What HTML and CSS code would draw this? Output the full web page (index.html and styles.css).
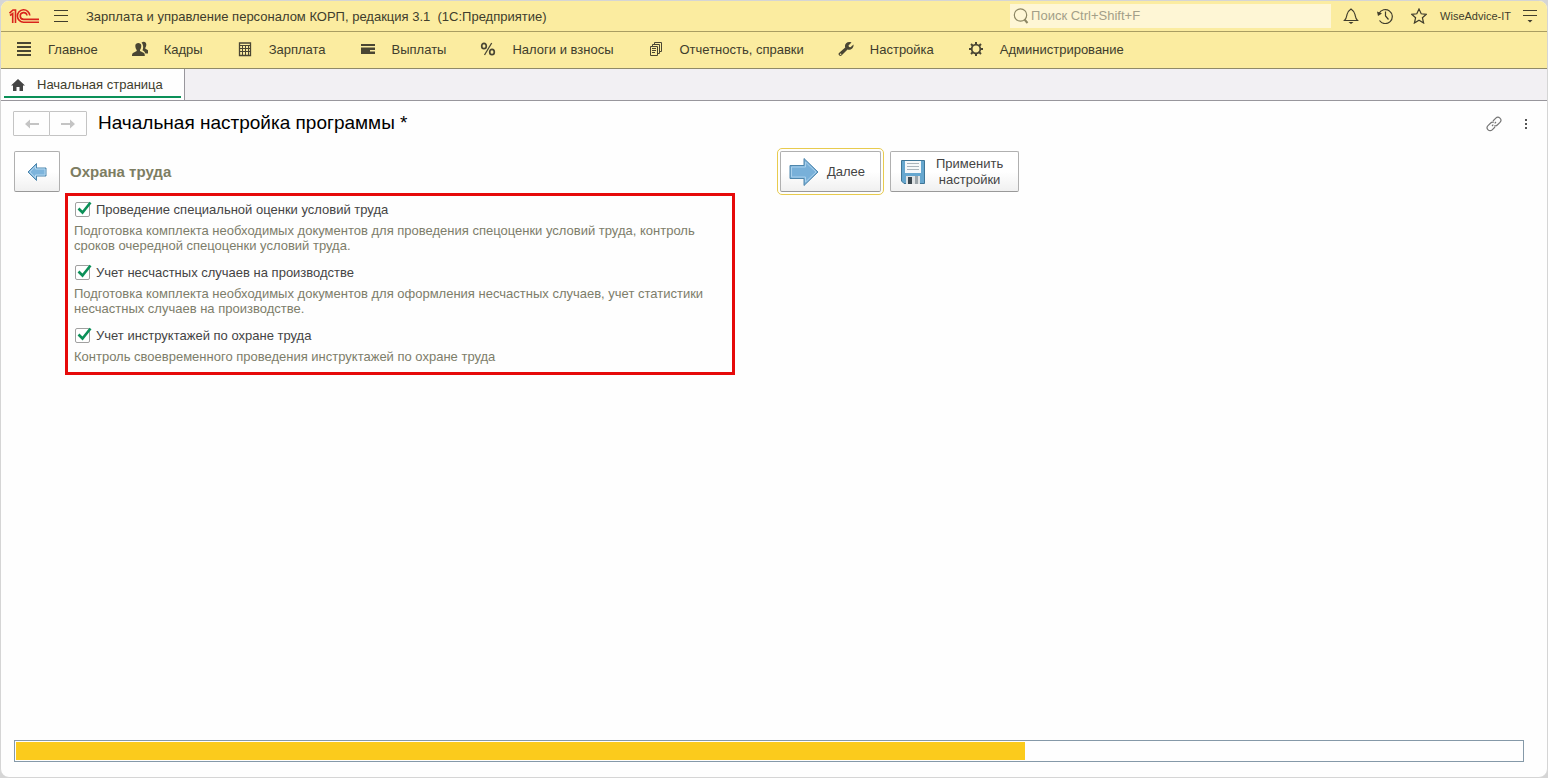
FILE: index.html
```
<!DOCTYPE html>
<html lang="ru">
<head>
    <meta charset="UTF-8">
    <meta name="viewport" content="width=device-width, initial-scale=1.0">
    <title>Зарплата и управление персоналом КОРП</title>
    <link rel="stylesheet" href="styles.css">
</head>
<body>
    <div class="window">
        <header class="titlebar">
            <svg class="logo" width="30" height="16" viewBox="0 0 30 16" fill="none" stroke="#d9241c" stroke-width="1.600">
                <path d="M.5 5.200L4 2H6.500V15M1 7.500L3.700 5.500V15"/>
                <path d="M20.800 7.500A6.200 6.200 0 1 0 14.600 14.200H30"/>
                <path d="M18 7.500A3.400 3.400 0 1 0 14.600 11.400H30"/>
            </svg>
            <button class="icon-btn burger" aria-label="Меню">
                <svg width="14" height="12" viewBox="0 0 14 12" stroke="#403d2c"><path d="M0 .5H14M0 5.500H14M0 11.500H14"/></svg>
            </button>
            <span class="app-title">Зарплата и управление персоналом КОРП, редакция 3.1&nbsp; (1С:Предприятие)</span>
            <label class="search">
                <svg width="16" height="16" viewBox="0 0 16 16" fill="none" stroke="#8c8664"><circle cx="7.500" cy="7" r="6.200" stroke-width="1.200"/><path d="M11.500 11.500L14.500 15" stroke-width="2"/></svg>
                <input type="text" placeholder="Поиск Ctrl+Shift+F" aria-label="Поиск">
            </label>
            <div class="tools">
                <button class="icon-btn" aria-label="Уведомления">
                    <svg width="16" height="16" viewBox="0 0 16 16" fill="none" stroke="#403d2c" stroke-width="1.200"><path d="M1.500 12.500H14.500C12.500 10.500 12.500 9 12 6.500C11.600 4 10.500 2.700 8 1C5.500 2.700 4.400 4 4 6.500C3.500 9 3.500 10.500 1.500 12.500Z"/><path d="M5.500 14H10.500L8 16Z" fill="#403d2c" stroke="none"/></svg>
                </button>
                <button class="icon-btn" aria-label="История">
                    <svg width="16" height="16" viewBox="0 0 16 16" fill="none" stroke="#403d2c" stroke-width="1.200"><path d="M2 5.500A7 7 0 1 1 2.500 12.500M8.500 3.500V8L11.500 11.500"/><path d="M0 3.500L5 5.500L1 8Z" fill="#403d2c" stroke="none"/></svg>
                </button>
                <button class="icon-btn" aria-label="Избранное">
                    <svg width="16" height="16" viewBox="0 0 16 16" fill="none" stroke="#403d2c" stroke-width="1.200"><path d="M8 1L10.200 5.800L15.300 6.300L11.400 9.700L12.600 15L8 12.200L3.400 15L4.600 9.700L.7 6.300L5.800 5.800Z"/></svg>
                </button>
            </div>
            <a class="user" href="#">WiseAdvice-IT</a>
            <button class="icon-btn" aria-label="Сервис">
                <svg width="14" height="14" viewBox="0 0 14 14" stroke="#403d2c"><path d="M0 1.500H14M0 6.500H14"/><path d="M4.500 11H9.500L7 13.500Z" fill="#403d2c" stroke="none"/></svg>
            </button>
        </header>

        <nav class="menu">
            <a href="#"><svg width="16" height="16" viewBox="0 0 16 16" stroke="#4a4633" stroke-width="2"><path d="M1 2H15M1 6H15M1 10H15M1 14H15"/></svg>Главное</a>
            <a href="#"><svg width="16" height="16" viewBox="0 0 16 16" fill="#4a4633"><path d="M9.500 1.800C11.500-.5 15 1 14.200 4.500C14 6 13.200 6.500 13.200 7.500L16 9.200V12.500H13.500C12.500 10.500 11.500 10 10.500 9.300C11.500 7 11.500 3.500 9.500 1.800Z"/><path d="M3.300 4.800C3.300 1 9.300 1 9.300 4.800C9.300 6.800 8.700 8 8 9V10L12 12C12.700 12.500 12.800 14 12.800 15H0C0 14 .2 12.500 1 12L4.700 10V9C4 8 3.300 6.800 3.300 4.800Z"/></svg>Кадры</a>
            <a href="#"><svg width="16" height="16" viewBox="0 0 16 16" fill="none" stroke="#4a4633"><path d="M2.500 2H13.500V14.500H2.500Z" stroke-width="1.300"/><path d="M3 4.500H13M3 7.500H13M3 10.500H13M5.500 5V14M8.500 5V14M11.500 5V14"/></svg>Зарплата</a>
            <a href="#"><svg width="16" height="16" viewBox="0 0 16 16" fill="#4a4633"><path d="M1 3H15V5H1ZM1 6.500H15V9H10V10.500H15V13H1Z"/></svg>Выплаты</a>
            <a href="#"><svg width="16" height="16" viewBox="0 0 16 16" fill="none" stroke="#4a4633" stroke-width="1.700"><ellipse cx="4" cy="5" rx="2.300" ry="2.700"/><ellipse cx="12" cy="11" rx="2.300" ry="2.700"/><path d="M11.700 2L4.500 14" stroke-width="1.300"/></svg>Налоги и взносы</a>
            <a href="#"><svg width="16" height="16" viewBox="0 0 16 16" fill="none" stroke="#4a4633"><path d="M2.500 5.500H9.500V14.500H2.500ZM4.500 5V3.500H11.500V12.500H10M6.500 3V1.500H13.500V10.500H12M4 7.500H8M4 9.500H8M4 11.500H7"/></svg>Отчетность, справки</a>
            <a href="#"><svg width="16" height="16" viewBox="0 0 16 16" fill="#4a4633"><path d="M13.500 1.500L10.500 4.500L11 6L12.500 6.300L15.500 3.500C16 6.500 13 9.500 9.500 8.500L3.500 14.500C2 16-.5 13.500 1 12L7.200 6.500C6 3 9.500-.3 13.500 1.500Z"/><circle cx="2.600" cy="13.300" r=".8" fill="#fbeca0"/></svg>Настройка</a>
            <a href="#"><svg width="16" height="16" viewBox="0 0 16 16" fill="none" stroke="#4a4633"><circle cx="8" cy="8" r="4.300" stroke-width="1.800"/><path d="M8 1V4M8 12V15M1 8H4M12 8H15M3 3L5.200 5.200M10.800 10.800L13 13M13 3L10.800 5.200M5.200 10.800L3 13" stroke-width="2"/></svg>Администрирование</a>
        </nav>

        <div class="tabs">
            <a class="tab" href="#">
                <svg width="14" height="12" viewBox="0 0 14 12" fill="#444"><path d="M7 0L14 6.500H12V12H8.500V8H5.500V12H2V6.500H0Z"/></svg>
                Начальная страница
            </a>
        </div>

        <main class="page">
            <div class="page-head">
                <div class="history">
                    <button aria-label="Назад" disabled><svg width="14" height="10" viewBox="0 0 14 10" fill="#c4c4c4"><path d="M0 5L5 .5V4H14V6H5V9.500Z"/></svg></button>
                    <button aria-label="Вперед" disabled><svg width="14" height="10" viewBox="0 0 14 10" fill="#c4c4c4"><path d="M14 5L9 .5V4H0V6H9V9.500Z"/></svg></button>
                </div>
                <h1>Начальная настройка программы *</h1>
                <button class="icon-btn" aria-label="Получить ссылку">
                    <svg width="16" height="16" viewBox="0 0 16 16" fill="none" stroke="#777" stroke-width="1.200"><path d="M7 5L9.800 2.200A2.900 2.900 0 0 1 14 6.300L11.300 9C10.400 9.900 9.300 10 8.300 9.600M9 11L6.200 13.800A2.900 2.900 0 0 1 2 9.700L4.700 7C5.600 6.100 6.700 6 7.700 6.400M6 10L7.300 8.700M8.700 7.300L10 6"/></svg>
                </button>
                <button class="icon-btn more" aria-label="Еще">
                    <svg width="4" height="12" viewBox="0 0 4 12" fill="#555"><path d="M1 1H3V3H1ZM1 5H3V7H1ZM1 9H3V11H1Z"/></svg>
                </button>
            </div>

            <div class="columns">
                <section>
                    <div class="section-head">
                        <button class="btn back" aria-label="Предыдущий шаг">
                            <svg width="20" height="20" viewBox="0 0 20 20"><path d="M1 10L9.500 1.500V6H19V14H9.500V18.500Z" fill="#7db4dc" stroke="#4e86ac"/><path d="M2.800 10L8.500 4.200V7H18V13H8.500V15.800Z" fill="none" stroke="#b5d8f0"/></svg>
                        </button>
                        <h2>Охрана труда</h2>
                    </div>
                    <div class="options">
                        <label class="option">
                            <span class="check"><input type="checkbox" checked><svg width="16" height="16" viewBox="0 0 16 16"><path d="M2.500 7.500L6.500 11.500L14.500 1.500" fill="none" stroke="#0b9058" stroke-width="2.600"/></svg></span>
                            Проведение специальной оценки условий труда
                        </label>
                        <p>Подготовка комплекта необходимых документов для проведения спецоценки условий труда, контроль сроков очередной спецоценки условий труда.</p>
                        <label class="option">
                            <span class="check"><input type="checkbox" checked><svg width="16" height="16" viewBox="0 0 16 16"><path d="M2.500 7.500L6.500 11.500L14.500 1.500" fill="none" stroke="#0b9058" stroke-width="2.600"/></svg></span>
                            Учет несчастных случаев на производстве
                        </label>
                        <p>Подготовка комплекта необходимых документов для оформления несчастных случаев, учет статистики несчастных случаев на производстве.</p>
                        <label class="option">
                            <span class="check"><input type="checkbox" checked><svg width="16" height="16" viewBox="0 0 16 16"><path d="M2.500 7.500L6.500 11.500L14.500 1.500" fill="none" stroke="#0b9058" stroke-width="2.600"/></svg></span>
                            Учет инструктажей по охране труда
                        </label>
                        <p>Контроль своевременного проведения инструктажей по охране труда</p>
                    </div>
                </section>
                <div class="actions">
                    <button class="btn next">
                        <svg width="30" height="30" viewBox="0 0 30 30"><path d="M1 8.500H15V1.500L29 15L15 28.500V21.500H1Z" fill="#78b0d9" stroke="#4e86ac"/><path d="M2.500 10H16.500V5L27 15L16.500 25V20H2.500Z" fill="none" stroke="#a9d0ec"/></svg>
                        Далее
                    </button>
                    <button class="btn apply">
                        <svg width="24" height="24" viewBox="0 0 24 24"><path d="M.5 .5H23.500V23.500H3L.5 21Z" fill="#66a7cf" stroke="#3f7697"/><path d="M4 1H20V13H4Z" fill="#f5f8fa"/><path d="M6 3.500H18M6 6.500H18M6 9.500H18" stroke="#a9b4bc"/><path d="M5 16H19V24H5Z" fill="#dfe3e5"/><path d="M7 17H11V24H7Z" fill="#3c4850"/><path d="M14 16H17V24H14Z" fill="#9da6ab"/></svg>
                        <span>Применить<br>настройки</span>
                    </button>
                </div>
            </div>

            <progress class="steps" value="67" max="100" aria-label="Ход настройки"></progress>
        </main>
    </div>
</body>
</html>
```
FILE: styles.css
```
* {
    box-sizing: border-box;
}
body {
    margin: 0;
    background-color: #d5d5d5;
    font-family: "Liberation Sans", Arial, sans-serif;
    font-size: 13px;
    color: #403d2c;
}
button, input {
    font: inherit;
    color: inherit;
}
a {
    color: inherit;
    text-decoration: none;
}
svg {
    display: block;
    flex: none;
}
.window {
    display: flex;
    flex-direction: column;
    min-height: 100vh;
    border: 1px solid #d5d5d5;
    border-radius: 9px;
    overflow: hidden;
    background-color: #fefefe;
}
.icon-btn {
    display: flex;
    padding: 0;
    border: 0;
    background: none;
    cursor: pointer;
}

/* title bar */
.titlebar {
    display: flex;
    align-items: center;
    height: 31px;
    padding: 0 10px 0 8px;
    background-color: #fbeca0;
    border-bottom: 1px solid #a99d62;
}
.burger {
    margin: 0 18px 0 15px;
}
.app-title {
    flex: 1;
    white-space: nowrap;
}
.search {
    display: flex;
    align-items: center;
    gap: 2px;
    width: 321px;
    height: 24px;
    padding-left: 3px;
    background-color: #fef6d5;
}
.search input {
    flex: 1;
    min-width: 0;
    padding: 0 0 2px;
    border: 0;
    outline: none;
    background: none;
}
.search input::placeholder {
    color: #a39f88;
}
.tools {
    display: flex;
    gap: 18px;
    margin: 0 13px 0 12px;
}
.user {
    margin-right: 12px;
    font-size: 11px;
}

/* sections menu */
.menu {
    display: flex;
    align-items: center;
    gap: 34px;
    height: 37px;
    padding: 0 16px 2px 15px;
    background-color: #fbeca0;
    border-bottom: 1px solid #8f8a68;
}
.menu a {
    display: flex;
    align-items: center;
    gap: 16px;
    white-space: nowrap;
}

/* open tabs */
.tabs {
    display: flex;
    height: 32px;
    background-color: #f2f0f3;
    border-bottom: 1px solid #98969c;
}
.tab {
    display: flex;
    align-items: center;
    gap: 12px;
    padding: 0 21px 0 10px;
    background: linear-gradient(#0b9058, #0b9058) 3px 27px / calc(100% - 6px) 2px no-repeat #fefefe;
    border-right: 1px solid #98969c;
}

/* form */
.page {
    flex: 1;
    display: flex;
    flex-direction: column;
    padding: 10px 13px 15px;
    color: #444;
}
.page-head {
    display: flex;
    align-items: center;
    gap: 22px;
    height: 25px;
}
.history {
    display: flex;
    margin-left: -1px;
}
.history button {
    display: flex;
    align-items: center;
    justify-content: center;
    width: 37px;
    height: 25px;
    padding: 0;
    border: 1px solid #c4c4c4;
    border-radius: 1px;
    background-color: #fefefe;
}
.history button + button {
    width: 38px;
    margin-left: -1px;
}
h1 {
    flex: 1;
    margin: 0 0 0 -11px;
    padding-bottom: 2px;
    font-size: 19px;
    font-weight: normal;
    color: #000;
}
.more {
    margin-right: 6px;
}
.columns {
    display: grid;
    grid-template-columns: 1fr 1fr;
    margin-top: 15px;
}
.section-head {
    display: flex;
    align-items: center;
    gap: 10px;
}
h2 {
    margin: 0;
    font-size: 15px;
    color: #7d7d62;
}
.btn {
    display: flex;
    align-items: center;
    justify-content: center;
    height: 41px;
    padding: 0 8px;
    border: 1px solid #b0b0b0;
    border-bottom-color: #999;
    border-radius: 2px;
    background: linear-gradient(#fff 50%, #f0f0f0);
    cursor: pointer;
}
.back {
    width: 46px;
}
.options {
    max-width: 670px;
    margin: 1px 0 0 51px;
    padding: 3px 6px 8px;
    border: 3px solid #e60a0a;
}
.option {
    display: flex;
    align-items: center;
    gap: 6px;
    height: 20px;
}
.check {
    position: relative;
    margin-left: 1px;
}
.check input {
    display: block;
    appearance: none;
    width: 15px;
    height: 15px;
    margin: 0;
    border: 1px solid #a0a0a0;
    border-radius: 2px;
    background-color: #fff;
}
.check svg {
    position: absolute;
    top: -1px;
    left: 1px;
    pointer-events: none;
}
.check input:not(:checked) + svg {
    display: none;
}
.options p {
    margin: 4px 0 9px;
    line-height: 15px;
    color: #7d7d6a;
}
.options p:last-child {
    margin-bottom: 0;
}
.actions {
    display: flex;
    align-items: flex-start;
    gap: 9px;
    padding-left: 6px;
}
.next {
    justify-content: flex-start;
    width: 101px;
    outline: 1px solid #e8cb4e;
    outline-offset: 2px;
}
.next, .apply {
    gap: 8px;
}
.apply {
    gap: 11px;
    justify-content: flex-start;
    width: 129px;
    padding-left: 10px;
    line-height: 16px;
}
.steps {
    appearance: none;
    display: block;
    width: calc(100% - 10px);
    height: 22px;
    margin-top: auto;
    padding: 1px;
    border: 1px solid #8599a8;
    background-color: #fefefe;
}
.steps::-webkit-progress-bar {
    background-color: #fefefe;
}
.steps::-webkit-progress-value {
    background-color: #fbcb1c;
}
```
